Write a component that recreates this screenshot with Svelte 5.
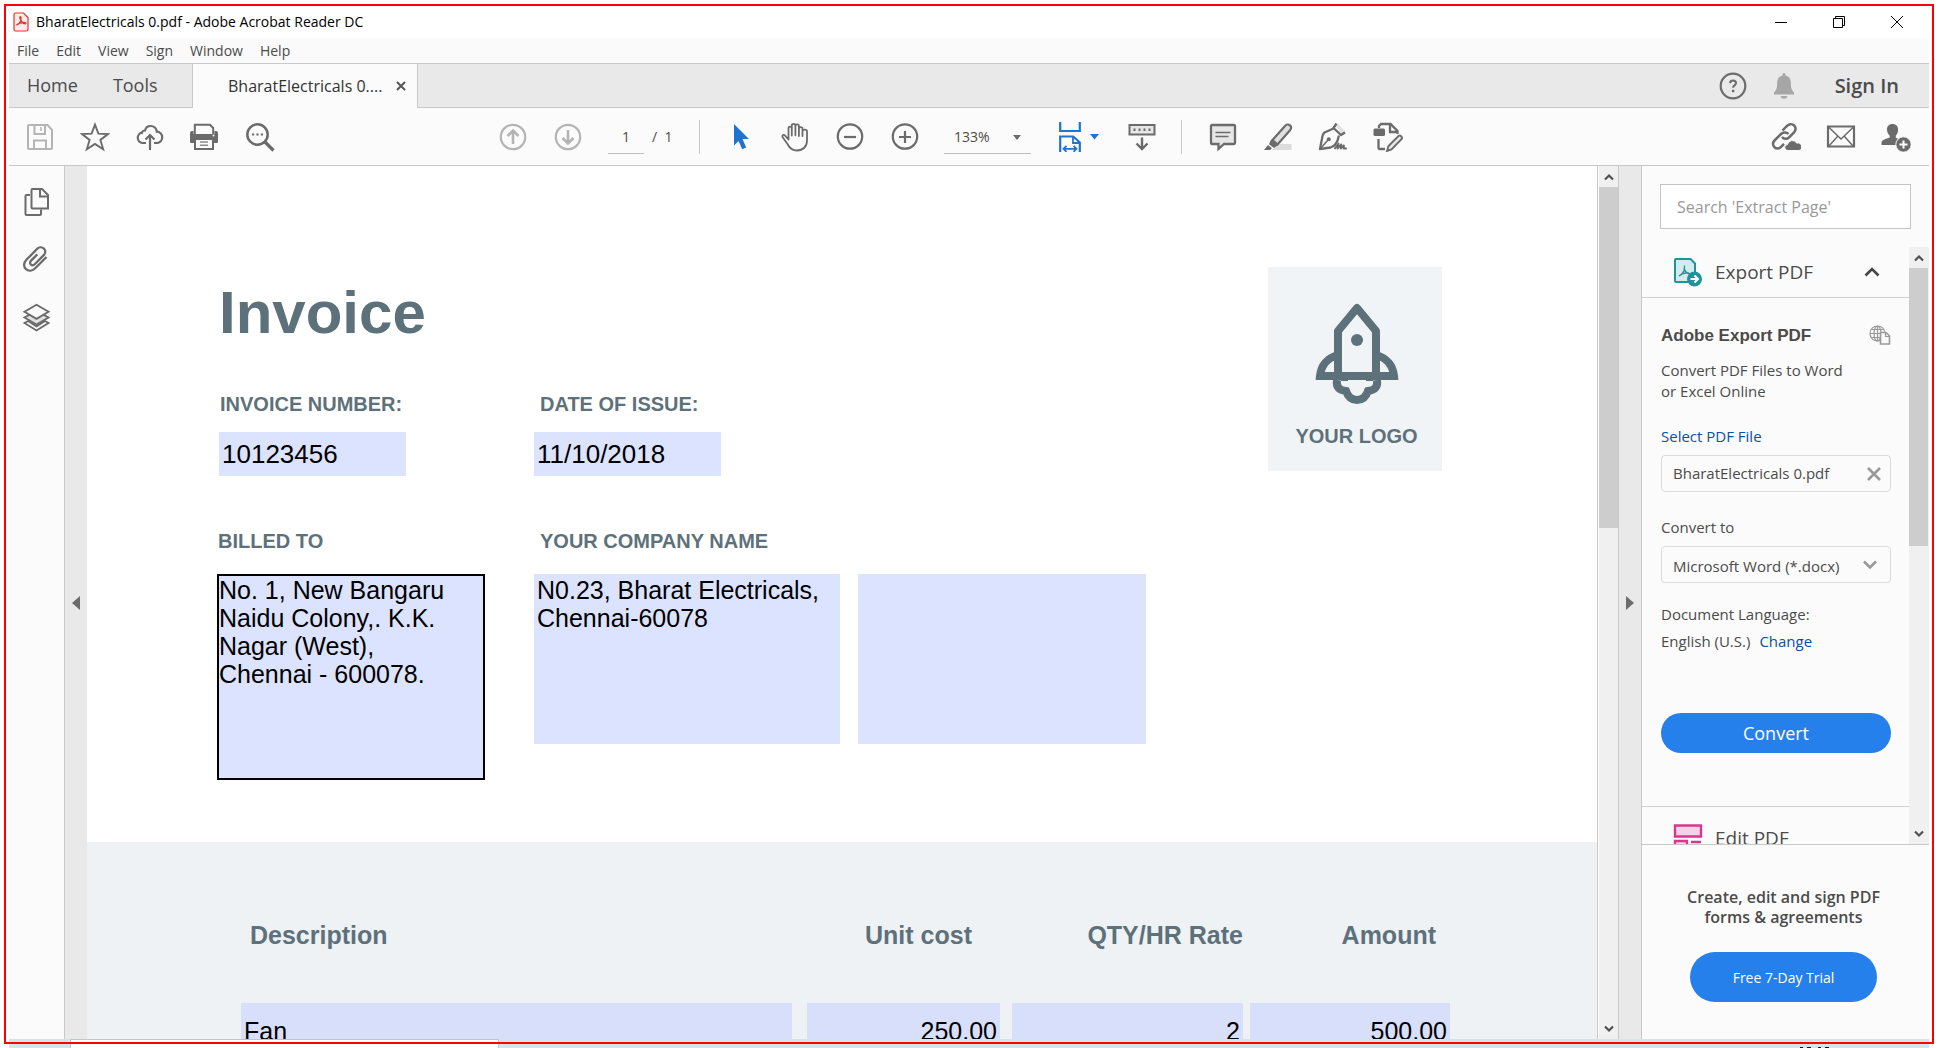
<script>
  const menus = ['File', 'Edit', 'View', 'Sign', 'Window', 'Help'];
  let search = $state('');
  let pageNumber = $state('1');
  let invoiceNumber = $state('10123456');
  let issueDate = $state('11/10/2018');
  let billedTo = $state('No. 1, New Bangaru\nNaidu Colony,. K.K.\nNagar (West),\nChennai - 600078.');
  let company = $state('N0.23, Bharat Electricals,\nChennai-60078');
  let extra = $state('');
  const items = [{ name: 'Fan', cost: '250.00', qty: '2', amount: '500.00' }];
</script>

{#snippet scrollbar(size)}
  <div class="scrollbar">
    <button class="arrow" aria-label="Scroll up">
      <svg width="10" height="8" viewBox="0 0 10 8"><path d="M1 6.5 5 2.5 9 6.5" fill="none" stroke="#505050" stroke-width="2.2" /></svg>
    </button>
    <div class="track"><div class="thumb" style="height: {size}%"></div></div>
    <button class="arrow" aria-label="Scroll down">
      <svg width="10" height="8" viewBox="0 0 10 8"><path d="M1 1.5 5 5.5 9 1.5" fill="none" stroke="#505050" stroke-width="2.2" /></svg>
    </button>
  </div>
{/snippet}

<div class="screen">
  <div class="app">
    <header class="titlebar">
      <svg width="16" height="20" viewBox="0 0 16 20" fill="none" stroke="#e2342b">
        <path d="M2.5 1h8L15 5.5V17.500a1.500 1.500 0 0 1-1.500 1.500h-11A1.500 1.500 0 0 1 1 17.500v-15A1.500 1.500 0 0 1 2.500 1z" fill="#fdeceb" stroke-width="1.200" />
        <path d="M3.500 13c3.500-1.500 5-5 4.300-8-.5-1-1.200.2-.6 1.800.8 2.500 3 4.700 5 4.900 1.300-.2.3-1.200-1.200-1.200-3 0-5.500.9-7.500 2.500z" stroke-width="1.500" />
      </svg>
      <span class="title">BharatElectricals 0.pdf - Adobe Acrobat Reader DC</span>
      <div class="winbtns">
        <button aria-label="Minimize"><svg width="14" height="14" viewBox="0 0 14 14"><path d="M1 7.500h12" stroke="#000" /></svg></button>
        <button aria-label="Restore"><svg width="14" height="14" viewBox="0 0 14 14" fill="none" stroke="#000"><path d="M1.500 3.500h9v9h-9zM3.500 3.500v-2h9v9h-2" /></svg></button>
        <button aria-label="Close"><svg width="14" height="14" viewBox="0 0 14 14"><path d="M1 1l12 12M13 1 1 13" stroke="#000" /></svg></button>
      </div>
    </header>

    <nav class="menubar">
      {#each menus as m}<button>{m}</button>{/each}
    </nav>

    <div class="tabs">
      <div class="plain-tabs">
        <button>Home</button>
        <button>Tools</button>
      </div>
      <div class="active-tab">
        <span>BharatElectricals 0....</span>
        <button aria-label="Close tab"><svg width="10" height="10" viewBox="0 0 10 10"><path d="M1 1l8 8M9 1 1 9" stroke="#555" stroke-width="2" /></svg></button>
      </div>
      <div class="account">
        <button class="slot" aria-label="Help">
          <svg width="30" height="30" viewBox="0 0 30 30" fill="none" stroke="#6b6b6b">
            <circle cx="15" cy="15" r="12.300" stroke-width="2.200" />
            <path d="M12 12.200c.2-1.700 1.400-2.600 3-2.600 1.800 0 3 1 3 2.500 0 2.300-2.900 2.300-2.900 4.600" stroke-width="2" />
            <path d="M15.100 18.800v2.400" stroke-width="2.400" />
          </svg>
        </button>
        <button class="slot" aria-label="Notifications">
          <svg width="30" height="30" viewBox="0 0 30 30" fill="#a6a6a6">
            <path d="M13.500 3.500a1.500 1.500 0 0 1 3 0v1C20 5.200 21.800 8 21.800 11.500c0 6 1 7.500 3.200 10.200V23.500H5V21.700c2.200-2.700 3.200-4.200 3.200-10.200C8.200 8 10 5.200 13.500 4.500zM11.800 25h6.400a3.200 2.600 0 0 1-6.400 0z" />
          </svg>
        </button>
        <button class="signin">Sign In</button>
      </div>
    </div>

    <div class="toolbar">
      <div class="group">
        <button class="slot" aria-label="Save">
          <svg width="30" height="30" viewBox="0 0 30 30" fill="none" stroke="#b4b4b4" stroke-width="2">
            <path d="M4 3h18.500L27 7.800V26a1 1 0 0 1-1 1H4a1 1 0 0 1-1-1V4a1 1 0 0 1 1-1z" />
            <path d="M9.500 3v9h10.500V3" /><path d="M9 27v-8.500h12V27" /><path d="M16 5v4" stroke-width="1.500" />
          </svg>
        </button>
        <button class="slot" aria-label="Add to favourites">
          <svg width="30" height="30" viewBox="0 0 30 30" fill="none" stroke="#6b6b6b" stroke-width="1.900">
            <path d="M15 2.600 18.400 11.600 28 12 20.400 17.900 23.200 27.300 15 21.900 6.800 27.300 9.600 17.900 2 12 11.600 11.600z" />
          </svg>
        </button>
        <button class="slot" aria-label="Upload to cloud">
          <svg width="30" height="30" viewBox="0 0 30 30" fill="none" stroke="#6b6b6b" stroke-width="2.200">
            <path d="M11 21H7.500A5.200 5.200 0 0 1 7 10.700c.2-1.300 1.700-2.300 3-2.200C10.800 5.500 13 4 15.500 4c3.500 0 6 2.500 6.300 5.700A5.700 5.700 0 0 1 22.500 21H19" />
            <path d="M15 28V13M10.500 17.500 15 13l4.500 4.500" />
          </svg>
        </button>
        <button class="slot" aria-label="Print">
          <svg width="30" height="30" viewBox="1 0 30 30">
            <path d="M1 11a2 2 0 0 1 2-2h1.500v3h21V9H27a2 2 0 0 1 2 2v9a1 1 0 0 1-1 1H2a1 1 0 0 1-1-1z" fill="#6b6b6b" />
            <path d="M5.800 13V2.800H21L24.200 6V13z" fill="#fafafa" stroke="#6b6b6b" stroke-width="2" />
            <path d="M4.800 12h20.400v5H4.800z" fill="#6b6b6b" />
            <path d="M6 17h18v10H6z" fill="#fafafa" stroke="#6b6b6b" stroke-width="2" />
            <path d="M11 20h8M11 23.200h8" stroke="#8a8a8a" stroke-width="1.400" />
            <circle cx="24.500" cy="13.500" r="1" fill="#fafafa" />
          </svg>
        </button>
        <button class="slot" aria-label="Find text">
          <svg width="30" height="30" viewBox="0 0 30 30" fill="none" stroke="#6b6b6b">
            <circle cx="12.500" cy="12.500" r="10.200" stroke-width="2.500" />
            <path d="M20 20l8.500 8.500" stroke-width="3.200" />
            <path d="M7 12.500h2.200M11.400 12.500h2.200M15.800 12.500H18" stroke-width="2.200" />
          </svg>
        </button>
      </div>

      <div class="group middle">
        <button class="slot" aria-label="Previous page">
          <svg width="30" height="30" viewBox="0 0 30 30" fill="none" stroke="#b4b4b4" stroke-width="2.200">
            <circle cx="15" cy="15" r="12.200" /><path d="M15 22V8.500M9.500 14 15 8.500l5.500 5.500" stroke-width="2.600" />
          </svg>
        </button>
        <button class="slot" aria-label="Next page">
          <svg width="30" height="30" viewBox="0 0 30 30" fill="none" stroke="#b4b4b4" stroke-width="2.200">
            <circle cx="15" cy="15" r="12.200" /><path d="M15 8v13.500M9.500 16l5.500 5.500 5.500-5.500" stroke-width="2.600" />
          </svg>
        </button>
        <input class="pageno" aria-label="Page number" bind:value={pageNumber} />
        <span class="total">/&nbsp; 1</span>
        <span class="sep"></span>
        <button class="slot" aria-label="Select tool">
          <svg width="30" height="30" viewBox="0 0 30 30"><path d="M9 2 24 17h-6.500l3.700 8.500-4 1.800L13.500 19 9 23.500z" fill="#1f74cd" /></svg>
        </button>
        <button class="slot" aria-label="Hand tool">
          <svg width="30" height="30" viewBox="0 0 30 30" fill="none" stroke="#6b6b6b" stroke-width="1.800" stroke-linejoin="round" stroke-linecap="round">
            <path d="M8.500 17.500V6.300c0-2.300 3.300-2.300 3.300 0v7.200V3.500c0-2.300 3.600-2.300 3.600 0v9.800V4c0-2.200 3.500-2.200 3.500 0v10V6.800c0-2.200 3.600-2.200 3.600 0V14V9.300c0-2.200 4.500-2.200 4.500 0v9.200c0 6-4 10-10 10-5 0-7.500-2.500-9.500-6.500L2.500 15c-.8-2 1.500-2.800 2.800-1.200z" />
          </svg>
        </button>
        <button class="slot" aria-label="Zoom out">
          <svg width="30" height="30" viewBox="0 0 30 30" fill="none" stroke="#6b6b6b" stroke-width="2.200"><circle cx="15" cy="14.500" r="12.200" /><path d="M9 15h12" /></svg>
        </button>
        <button class="slot" aria-label="Zoom in">
          <svg width="30" height="30" viewBox="0 0 30 30" fill="none" stroke="#6b6b6b" stroke-width="2.200"><circle cx="15" cy="14.500" r="12.200" /><path d="M9 15h12M15 9v12" /></svg>
        </button>
        <div class="zoom">
          <select aria-label="Zoom level"><option>133%</option></select>
          <svg width="10" height="6" viewBox="0 0 10 6"><path d="M1 0h8L5 5z" fill="#6b6b6b" /></svg>
        </div>
        <button class="fit" aria-label="Fit page width">
          <svg width="24" height="30" viewBox="0 0 24 30" fill="none" stroke="#1f74cd" stroke-width="2.200">
            <path d="M2.200 0v9h19.600V0M2.200 30V14.500h13l6.600 6V30" />
            <path d="M15 15v6h6" stroke-width="1.800" />
            <path d="M5.500 26.800h13M8.500 23.800l-3 3 3 3M15.500 23.800l3 3-3 3" stroke-width="1.800" />
          </svg>
          <svg width="9" height="6" viewBox="0 0 9 6"><path d="M0 0h9L4.500 5.500z" fill="#1f74cd" /></svg>
        </button>
        <button class="slot" aria-label="Scrolling pages">
          <svg width="30" height="30" viewBox="0 0 30 30" fill="none" stroke="#6b6b6b" stroke-width="2">
            <path d="M2.500 3h25v9.500h-25z" fill="#e6e6e6" />
            <path d="M6.500 7.800h2M11.500 7.800h2M16.500 7.800h2M21.500 7.800h2" stroke-width="2.500" />
            <path d="M15 15.500v11.500M9.500 21.500 15 27l5.500-5.500" stroke-width="2.400" />
          </svg>
        </button>
        <span class="sep right-sep"></span>
        <button class="slot" aria-label="Comment">
          <svg width="30" height="30" viewBox="0 0 30 30" fill="#e6e6e6" stroke="#6b6b6b" stroke-width="2.300">
            <path d="M4 3h22a1 1 0 0 1 1 1v17a1 1 0 0 1-1 1H16l-5.500 5V22H4a1 1 0 0 1-1-1V4a1 1 0 0 1 1-1z" />
            <path d="M7.500 10.500h15M7.500 14.500h13" stroke-width="1.500" />
          </svg>
        </button>
        <button class="slot" aria-label="Highlight">
          <svg width="30" height="30" viewBox="0 0 30 30">
            <path d="M9 28l7-6h12.500v6z" fill="#dcdcdc" />
            <path d="M9.500 18 22 4c1.500-1.800 3.500-2 5-.6 1.500 1.400 1.300 3.300-.2 5L14.500 22.500z" fill="#e0e0e0" stroke="#6b6b6b" stroke-width="2.200" />
            <path d="M8 17.500l7 5.500-4 3-5-3.800zM5 23l4 3.300L7 28H1z" fill="#6b6b6b" />
          </svg>
        </button>
        <button class="slot" aria-label="Sign">
          <svg width="30" height="30" viewBox="0 0 30 30" fill="none" stroke="#6b6b6b" stroke-width="2.300" stroke-linejoin="round">
            <path d="M17.500 3.500l2-2 8 8-3.500 3z" fill="#e2e2e2" stroke="none" /><path d="M18.500 1.500l-3 4.500 7.500 7 4-2.500" />
            <path d="M15.500 6.500 6.500 10.500c-1.500 1-2 3-2.500 6L2 27l10.500-1.500c4.500-1 7-5 8.500-12" />
            <path d="M2.500 26.500l7.500-8.500" stroke-width="1.600" /><circle cx="10.800" cy="17.200" r="2" fill="#6b6b6b" stroke="none" />
            <path d="M16.500 27l4-5.500-1 5 3.800-4-.5 4 3-3v3h3" stroke-width="1.900" />
          </svg>
        </button>
        <button class="slot" aria-label="Fill and edit">
          <svg width="30" height="30" viewBox="0 0 30 30" fill="none" stroke="#6b6b6b" stroke-width="2.300">
            <path d="M6 6V4l2-2h9.500l7 7v3M17 2.500V10h7M5.500 17v9a1 1 0 0 0 1 1H12" />
            <rect x="0.500" y="6.500" width="11.500" height="7.500" rx="1.500" fill="#6b6b6b" stroke="none" />
            <path d="M14 29l1.500-5L25.500 14c1.800-1.300 4.500 1.200 3 3.200L18.500 27.500z" fill="#e8e8e8" stroke-width="1.900" />
          </svg>
        </button>
      </div>

      <div class="group share">
        <button class="slot" aria-label="Share link">
          <svg width="30" height="30" viewBox="0 0 30 30" fill="none" stroke="#6b6b6b" stroke-width="2.500">
            <path d="M11.500 8.500l4.500-4.600c2.300-2.200 5.300-2.300 7.200-.4 1.900 1.800 1.800 4.900-.2 7L18 15.500c-2 1.800-5 1.900-7-.5" />
            <path d="M17.500 12c-1.900-2.200-5.500-2-7.500 0L3.500 18.500c-2 2-2 5 0 6.700 1.900 1.700 4.500 1.500 6.500-.4l3-3" />
            <path d="M17 28.500a3 3 0 0 1-.5-6 5 5 0 0 1 9.300-1.300 3.700 3.700 0 0 1 2.200 7.300z" fill="#6b6b6b" stroke="#fafafa" stroke-width="1" />
          </svg>
        </button>
        <button class="slot" aria-label="Send by mail">
          <svg width="30" height="30" viewBox="0 0 30 30" fill="none" stroke="#6b6b6b" stroke-width="2.200">
            <path d="M2 4.500h26v20H2z" /><path d="M2.500 5 15 17 27.500 5M2.500 24.500 12 14M27.500 24.500 18 14" stroke-width="1.500" />
          </svg>
        </button>
        <button class="slot" aria-label="Add people">
          <svg width="30" height="30" viewBox="0 0 30 30" fill="#6b6b6b">
            <path d="M11.500 2c3.800 0 5.800 2.500 5.600 6.200-.2 2.600-1.200 4.300-2.300 5.300v2.200l4.700 2V23H0.500v-2.300c0-2 1.500-3 4-3.800L8.700 15.500v-2C7.300 12.300 6.200 10.600 6 8 5.800 4.400 7.800 2 11.500 2z" />
            <circle cx="22.500" cy="22.500" r="7.700" stroke="#fafafa" stroke-width="1" />
            <path d="M22.500 18.500v8M18.500 22.500h8" stroke="#fff" stroke-width="2" />
          </svg>
        </button>
      </div>
    </div>

    <div class="body">
      <aside class="rail">
        <button aria-label="Page thumbnails">
          <svg width="30" height="30" viewBox="0 0 30 30" fill="none" stroke="#6b6b6b" stroke-width="2">
            <path d="M8 8H4.500a1 1 0 0 0-1 1v18a1 1 0 0 0 1 1H18a1 1 0 0 0 1-1v-4.500" />
            <path d="M10.500 2h9.500l6 6v13.500H10.500a1 1 0 0 1-1-1V3a1 1 0 0 1 1-1z" /><path d="M18 2.500V9.500h7.500" />
          </svg>
        </button>
        <button aria-label="Attachments">
          <svg width="30" height="30" viewBox="1 1 30 30" fill="none" stroke="#6b6b6b" stroke-width="2.300">
            <path d="M25.500 13 14.500 24c-3 3-7 3.500-9.500 1.200-2.700-2.600-2.400-6.500.4-9.400L16 5c2-2 5-2.200 6.900-.4 1.900 1.900 1.700 4.700-.4 6.800L14 20c-1.500 1.500-3.200 1.500-4.200.5-1.100-1.100-.9-2.700.5-4.100l6-6" />
          </svg>
        </button>
        <button aria-label="Layers">
          <svg width="30" height="30" viewBox="0 0 30 30" fill="none" stroke="#6b6b6b" stroke-width="1.900">
            <path d="M2.500 20 14.500 27.500 26.500 20 23 18 14.500 23.300 6 18z" fill="#fafafa" />
            <path d="M2.500 14.500 14.500 21.500 26.500 14.500 22 12 7 12z" fill="#e0e0e0" />
            <path d="M14.500 1.800 26.500 8.800 14.500 15.800 2.500 8.800z" fill="#fafafa" />
          </svg>
        </button>
      </aside>
      <button class="gutter" aria-label="Show navigation pane">
        <svg width="8" height="14" viewBox="0 0 8 14"><path d="M8 0v14L0 7z" fill="#6b6b6b" /></svg>
      </button>

      <main class="page">
        <form class="sheet">
          <h1>Invoice</h1>
          <div class="field first">
            <label for="num">INVOICE NUMBER:</label>
            <input id="num" bind:value={invoiceNumber} />
          </div>
          <div class="field">
            <label class="indent" for="date">DATE OF ISSUE:</label>
            <input id="date" bind:value={issueDate} />
          </div>
          <div class="logo">
            <svg width="84" height="104" viewBox="0 0 84 104" fill="none" stroke="#5d717b" stroke-width="8">
              <path d="M23 72V29L42 6l19 23v43" stroke-linejoin="round" />
              <path d="M23 53C12 56 6 64 5 74h74c-1-10-7-18-18-21" />
              <path d="M22 78c-1 7 2 10 9 11 2 6 6 9 11 9s9-3 11-9c7-1 10-4 9-11" />
              <path d="M26 78h7M58 78h-7" stroke-width="2" />
              <circle cx="42" cy="38" r="6" fill="#5d717b" stroke="none" />
            </svg>
            <span>YOUR LOGO</span>
          </div>
          <div class="block billed">
            <label for="billed">BILLED TO</label>
            <textarea id="billed" bind:value={billedTo}></textarea>
          </div>
          <div class="block company">
            <label class="indent" for="company">YOUR COMPANY NAME</label>
            <textarea id="company" bind:value={company}></textarea>
          </div>
          <div class="block extra">
            <textarea aria-label="Company details" bind:value={extra}></textarea>
          </div>
        </form>
        <section class="lines">
          <table>
            <thead>
              <tr><th>Description</th><th>Unit cost</th><th>QTY/HR Rate</th><th>Amount</th></tr>
            </thead>
            <tbody>
              {#each items as item}
                <tr>
                  <td><div>{item.name}</div></td>
                  <td><div>{item.cost}</div></td>
                  <td><div>{item.qty}</div></td>
                  <td><div>{item.amount}</div></td>
                </tr>
              {/each}
            </tbody>
          </table>
        </section>
      </main>

      {@render scrollbar(41)}
      <button class="gutter right" aria-label="Hide tools pane">
        <svg width="8" height="14" viewBox="0 0 8 14"><path d="M0 0v14l8-7z" fill="#6b6b6b" /></svg>
      </button>

      <aside class="panel">
        <input class="search" aria-label="Search tools" placeholder="Search 'Extract Page'" bind:value={search} />
        <div class="scroller">
          <div class="tools">
            <button class="tool">
              <svg width="30" height="30" viewBox="0 0 30 30">
                <path d="M3 2h14.500L22 6.500V25H3a1 1 0 0 1-1-1V3a1 1 0 0 1 1-1z" fill="#d3ebec" stroke="#1d9499" stroke-width="2" />
                <path d="M6 19c4-2 6-6 5.500-10.500M11 11c1 4 3 5.500 6 6M6 19c3-2.500 7-3.300 10-3" fill="none" stroke="#1d9499" stroke-width="1.300" />
                <circle cx="21.500" cy="22" r="7.500" fill="#1d9499" />
                <path d="M17.500 22h7M21.500 18.500 25 22l-3.500 3.500" fill="none" stroke="#fff" stroke-width="2" />
              </svg>
              <span>Export PDF</span>
              <svg class="chev" width="16" height="12" viewBox="0 0 16 12"><path d="M1.500 9.500 8 3l6.500 6.500" fill="none" stroke="#454545" stroke-width="2.600" /></svg>
            </button>
            <div class="export">
              <div class="heading">
                <h2>Adobe Export PDF</h2>
                <svg width="22" height="20" viewBox="0 0 22 20" fill="none" stroke="#999" stroke-width="1.200">
                  <circle cx="8.500" cy="8.500" r="7.500" /><ellipse cx="8.500" cy="8.500" rx="3.500" ry="7.500" /><path d="M1 8.500h15M2.500 4.500h12M2.500 12.500h12M8.500 1v15" />
                  <path d="M11.500 7.500h5.500l3.500 3.500v8h-9z" fill="#fafafa" stroke-width="1.600" /><path d="M16.500 7.500v4h4" />
                </svg>
              </div>
              <p>Convert PDF Files to Word or Excel Online</p>
              <a class="pick" href="#file">Select PDF File</a>
              <div class="box file">
                <span>BharatElectricals 0.pdf</span>
                <button aria-label="Remove file"><svg width="16" height="16" viewBox="0 0 16 16"><path d="M2 2l12 12M14 2 2 14" stroke="#999" stroke-width="2.600" /></svg></button>
              </div>
              <label class="to" for="format">Convert to</label>
              <div class="box format">
                <select id="format"><option>Microsoft Word (*.docx)</option></select>
                <svg width="14" height="10" viewBox="0 0 14 10"><path d="M1 1.500 7 7.500l6-6" fill="none" stroke="#999" stroke-width="2.600" /></svg>
              </div>
              <div class="lang">Document Language:<br />English (U.S.)<a href="#language">Change</a></div>
              <button class="pill convert">Convert</button>
            </div>
            <button class="tool edit">
              <svg width="30" height="30" viewBox="0 0 30 30" fill="#f7d2e6" stroke="#d83790" stroke-width="2.400">
                <path d="M2 1.500h26v11H2zM2 17h12v10H2z" /><path d="M18 18h10M18 23h10" />
              </svg>
              <span>Edit PDF</span>
            </button>
          </div>
          {@render scrollbar(50)}
        </div>
        <footer>
          <p>Create, edit and sign PDF<br />forms &amp; agreements</p>
          <button class="pill trial">Free 7-Day Trial</button>
        </footer>
      </aside>
    </div>
  </div>

  <div class="desktop">
    <div class="window-edge"></div>
    <svg width="36" height="1" viewBox="0 0 36 1"><path d="M3 .5h3M10 .5h4M21 .5h3M28 .5h4" stroke="#111" /></svg>
  </div>
  <div class="frame"></div>
</div>

<style>
  :global(body) { margin: 0; background: #fff; }
  * { box-sizing: border-box; }
  button, input, select, textarea { font: inherit; color: inherit; border: 0; padding: 0; margin: 0; background: none; border-radius: 0; outline: none; }
  svg { display: block; flex: none; }
  h1, h2, p { margin: 0; }
  a { color: #0d50a0; text-decoration: none; }

  .screen { position: relative; display: flex; flex-direction: column; height: 100vh; padding: 6px 9px 0; overflow: hidden; font-family: "Open Sans", "Noto Sans", sans-serif; font-size: 14px; color: #4b4b4b; }
  .frame { position: absolute; inset: 4px; border: 2px solid #f00; pointer-events: none; }
  .app { flex: 1; min-height: 0; display: flex; flex-direction: column; background: #fbfbfb; }

  .titlebar { flex: none; height: 32px; display: flex; align-items: center; gap: 7px; padding: 0 3px 0 4px; background: #fff; color: #000; }
  .title { line-height: 20px; }
  .winbtns { margin-left: auto; display: flex; }
  .winbtns button { width: 58px; height: 26px; display: flex; align-items: center; justify-content: center; }

  .menubar { flex: none; height: 26px; display: flex; gap: 17px; padding: 0 8px; border-bottom: 1px solid #c8c8c8; background: #fafafa; }

  .tabs { flex: none; height: 44px; display: flex; background: #e9e9e9; font-size: 18px; }
  .plain-tabs { width: 184px; display: flex; gap: 35px; padding: 0 18px 1px; border-right: 1px solid #c8c8c8; border-bottom: 1px solid #c8c8c8; }
  .active-tab { width: 225px; display: flex; align-items: center; justify-content: space-between; padding: 0 11px 0 35px; border-right: 1px solid #c8c8c8; background: #fbfbfb; font-size: 16px; color: #333; }
  .account { flex: 1; display: flex; align-items: center; justify-content: flex-end; padding-right: 30px; border-bottom: 1px solid #c8c8c8; }
  .account .slot { width: 51px; }
  .signin { margin-left: 25px; font-size: 20px; font-weight: 600; }

  .toolbar { flex: none; height: 58px; display: flex; align-items: center; padding: 0 6px 0 3px; border-bottom: 1px solid #c8c8c8; }
  .group { display: flex; align-items: center; }
  .middle { margin-left: 198px; }
  .share { margin-left: auto; }
  .slot { width: 55px; height: 34px; display: flex; align-items: center; justify-content: center; }
  .pageno { width: 36px; height: 34px; margin-left: 13px; border-bottom: 1px solid #c0c0c0; text-align: center; }
  .total { width: 30px; margin-left: 8px; white-space: nowrap; }
  .sep { width: 1px; height: 34px; margin: 0 12px 0 17px; background: #c8c8c8; }
  .right-sep { margin: 0 13px 0 12px; }
  .zoom { position: relative; width: 87px; height: 34px; margin-left: 12px; border-bottom: 1px solid #c0c0c0; }
  .zoom select { width: 100%; height: 100%; padding-left: 10px; appearance: none; }
  .zoom svg { position: absolute; right: 9px; top: 15px; pointer-events: none; }
  .fit { display: flex; align-items: center; gap: 8px; width: 83px; padding-left: 27px; }

  .body { flex: 1; min-height: 0; display: flex; }
  .rail { flex: none; width: 56px; padding-top: 7px; border-right: 1px solid #c8c8c8; }
  .rail button { width: 55px; height: 58px; display: flex; align-items: center; justify-content: center; }
  .gutter { flex: none; width: 22px; display: flex; align-items: center; justify-content: center; background: #e9e9e9; }
  .gutter.right { width: 24px; border: solid #c8c8c8; border-width: 0 1px; }

  .scrollbar { flex: none; width: 20px; display: flex; flex-direction: column; background: #f0f0f0; }
  .arrow { height: 21px; display: flex; align-items: center; justify-content: center; }
  .track { flex: 1; min-height: 0; }
  .thumb { width: 19px; background: #cdcdcd; }

  .page { flex: 1; min-width: 0; overflow: hidden; background: #fff; border-right: 1px solid #c8c8c8; font-family: "Liberation Sans", Arial, sans-serif; }
  .page + :global(.scrollbar) { border-left: 1px solid #fff; }
  .sheet { display: grid; grid-template-columns: 317fr 324fr 288fr 296fr; padding: 101px 155px 62px 130px; }
  h1 { grid-column: 1 / 4; margin: 11px 0 44px; padding-left: 2px; font-size: 60px; line-height: 70px; color: #5d717b; }
  .sheet label, .logo span { display: block; font-size: 20px; line-height: 24px; font-weight: 700; color: #5d717b; }
  .sheet label { padding-left: 1px; }
  .sheet .indent { padding-left: 6px; }
  .field { grid-row: 2; }
  .first { padding-left: 2px; }
  .field label { margin-bottom: 16px; }
  .field input { display: block; width: 187px; height: 44px; padding: 0 3px; background: #dce3ff; font-size: 26px; color: #000; }
  .logo { grid-area: 1 / 4 / 3 / 5; justify-self: end; width: 174px; height: 204px; display: flex; flex-direction: column; align-items: center; gap: 18px; padding: 35px 0 0 3px; background: #f0f4f7; }
  .block { grid-row: 3; margin-top: 53px; }
  .block label { margin-bottom: 21px; }
  .block textarea { display: block; width: 100%; height: 170px; padding: 2px 3px; background: #dce3ff; font-size: 25px; line-height: 28px; color: #000; resize: none; overflow: hidden; }
  .billed { padding-right: 49px; }
  .block.billed textarea { height: 206px; padding: 0; border: 2px solid #000; }
  .company { padding-right: 18px; }
  .extra { padding-top: 45px; }

  .lines { padding: 79px 147px 60px 154px; background: #eef2f5; font-size: 25px; line-height: 28px; }
  table, thead, tbody { display: block; }
  tr { display: grid; grid-template-columns: 551fr 208fr 243fr 207fr; }
  thead { margin-bottom: 54px; color: #5d717b; }
  th { padding: 0; text-align: right; white-space: nowrap; }
  th:nth-child(1) { padding-left: 9px; text-align: left; }
  th:nth-child(2) { padding-right: 28px; }
  th:nth-child(4) { padding-right: 14px; }
  td { padding: 0; text-align: right; color: #000; }
  td:nth-child(1) { text-align: left; }
  td:nth-child(2) { padding-left: 15px; }
  td:nth-child(3) { padding-left: 12px; }
  td:nth-child(4) { padding-left: 7px; }
  td div { padding: 14px 3px; background: #d8dffb; }

  .panel { flex: none; width: 287px; display: flex; flex-direction: column; font-size: 15px; line-height: 21px; }
  .search { flex: none; height: 45px; margin: 18px 18px 18px; padding: 0 16px; border: 1px solid #c4c4c4; background: #fff; font-size: 16px; }
  .search::placeholder { color: #999; opacity: 1; }
  .scroller { flex: 1; min-height: 0; display: flex; }
  .tools { flex: 1; min-width: 0; overflow: hidden; }
  .tool { width: 100%; height: 51px; display: flex; align-items: center; gap: 12px; padding: 0 29px 0 31px; border-bottom: 1px solid #d0d0d0; font-size: 19px; }
  .chev { margin-left: auto; }
  .export { padding: 27px 18px 53px 19px; border-bottom: 1px solid #d0d0d0; }
  .heading { display: flex; justify-content: space-between; }
  h2 { font: 700 17px/22px "Liberation Sans", Arial, sans-serif; }
  .export p { margin: 13px 0 24px; padding-right: 30px; }
  .pick { display: block; margin-bottom: 8px; }
  .box { position: relative; display: flex; align-items: center; justify-content: space-between; height: 37px; padding: 0 8px 0 11px; border: 1px solid #dcdcdc; border-radius: 4px; }
  .to { display: block; margin: 25px 0 8px; }
  .format { padding: 0; }
  .format select { width: 100%; height: 35px; padding: 3px 0 0 11px; appearance: none; }
  .format svg { position: absolute; right: 13px; top: 13px; pointer-events: none; }
  .lang { margin-top: 18px; line-height: 27px; }
  .lang a { margin-left: 9px; }
  .pill { display: block; border-radius: 25px; background: #2680eb; color: #fff; }
  .convert { width: 100%; height: 40px; margin-top: 58px; font-size: 18px; }
  .edit { height: 60px; padding-top: 4px; }
  footer { flex: none; height: 195px; padding: 42px 22px 0 18px; border-top: 1px solid #c8c8c8; text-align: center; }
  footer p { font-size: 16px; font-weight: 600; line-height: 20px; }
  .trial { width: 187px; height: 50px; margin: 25px auto 0; font-size: 14px; }

  .desktop { flex: none; height: 9px; display: flex; align-items: flex-end; justify-content: space-between; padding: 0 96px 0 61px; background: #d5e3ea; }
  .window-edge { width: 429px; height: 9px; border: 1px solid #c4c4c4; border-bottom: 0; background: #fff; }
</style>
